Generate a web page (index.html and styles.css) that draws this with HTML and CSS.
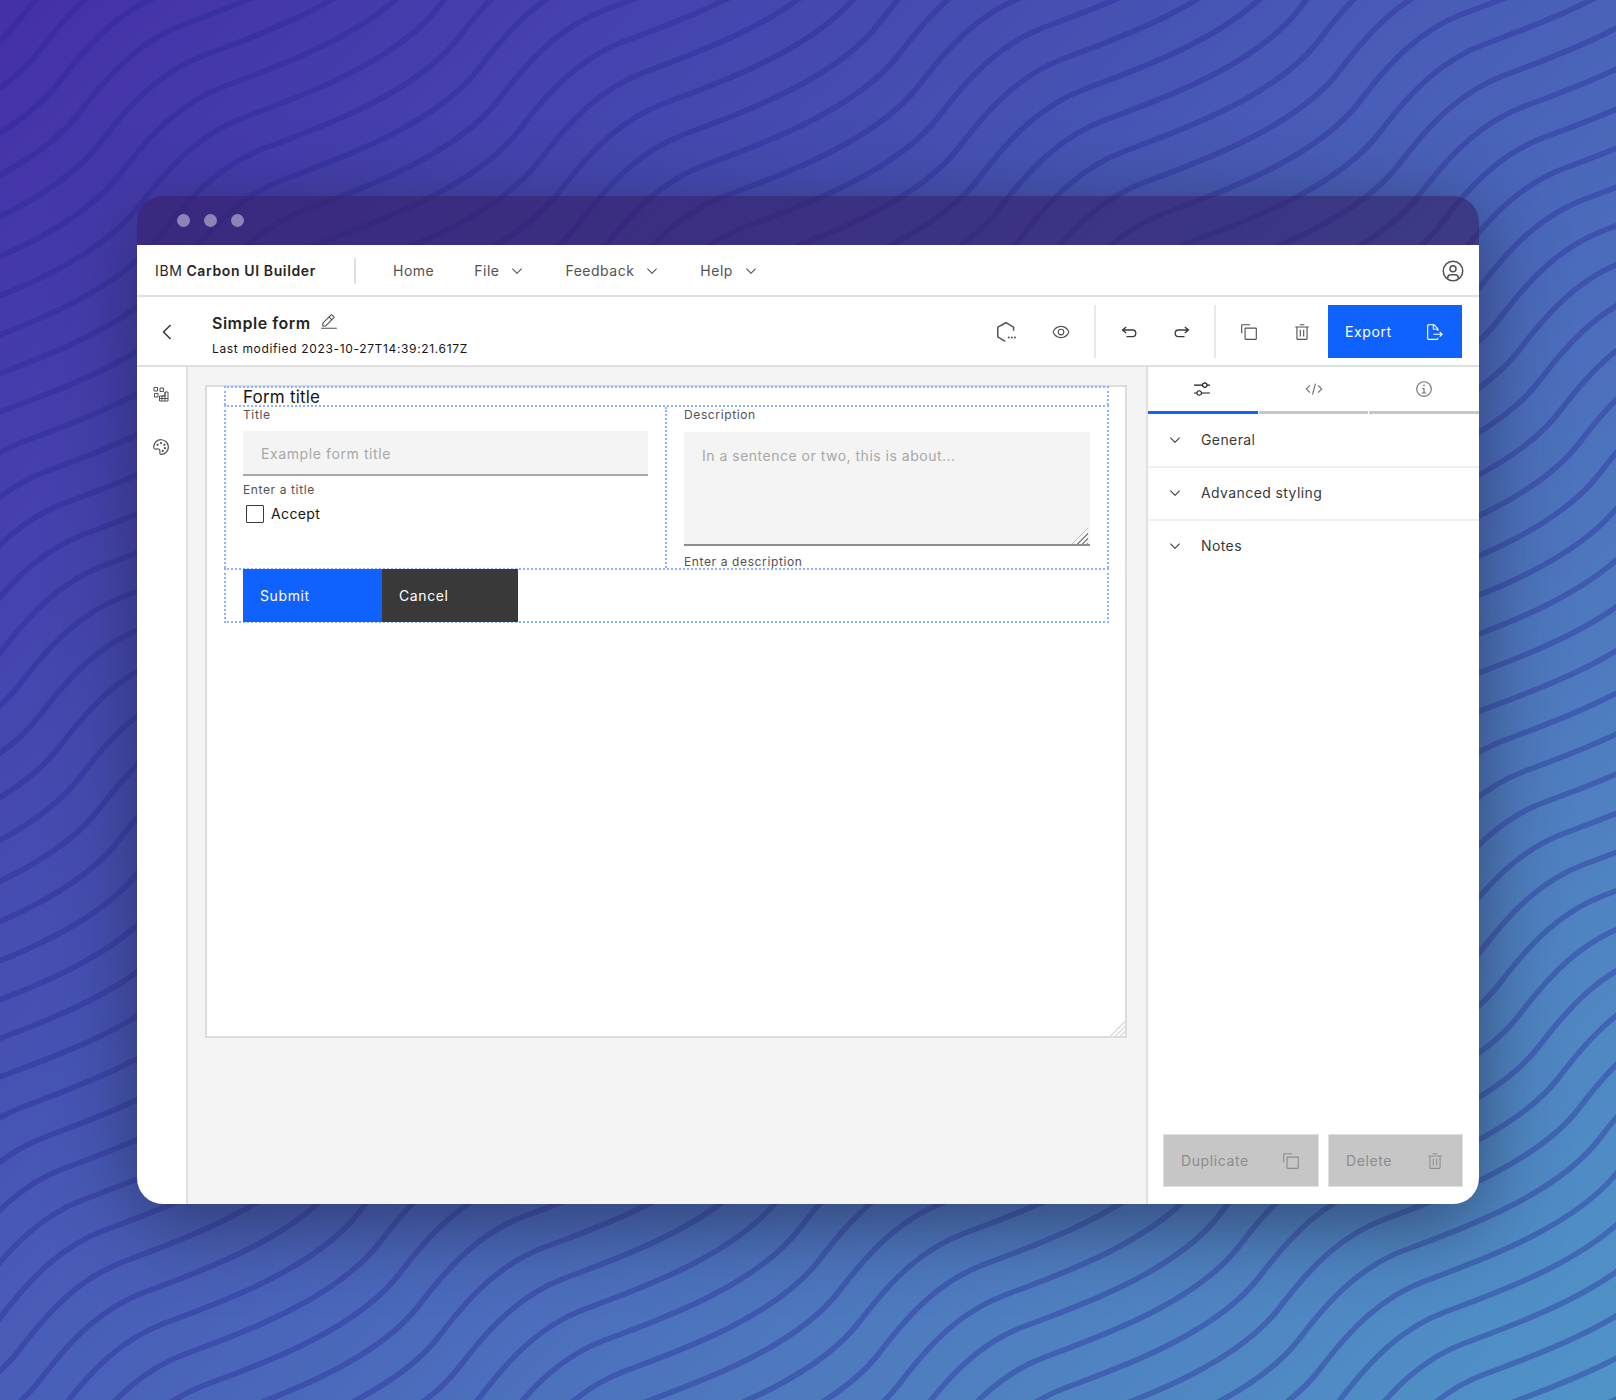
FILE: index.html
```html
<!DOCTYPE html>
<html lang="en">
<head>
<meta charset="utf-8">
<title>IBM Carbon UI Builder</title>
<link rel="stylesheet" href="styles.css">
</head>
<body>
<svg class="backdrop" viewBox="0 0 1616 1400" aria-hidden="true">
  <defs>
    <path id="wave" d="M-1520 957c32-42 62-72 105-88c45-17 150-52 195-112c32-42 62-72 105-88c45-17 150-52 195-112c32-42 62-72 105-88c45-17 150-52 195-112c32-42 62-72 105-88c45-17 150-52 195-112c32-42 62-72 105-88c45-17 150-52 195-112c32-42 62-72 105-88c45-17 150-52 195-112c32-42 62-72 105-88c45-17 150-52 195-112c32-42 62-72 105-88c45-17 150-52 195-112c32-42 62-72 105-88c45-17 150-52 195-112c32-42 62-72 105-88c45-17 150-52 195-112c32-42 62-72 105-88c45-17 150-52 195-112c32-42 62-72 105-88c45-17 150-52 195-112"/>
    <g id="waves8">
      <use href="#wave"/>
      <use href="#wave" transform="translate(20 31)"/>
      <use href="#wave" transform="translate(40 62)"/>
      <use href="#wave" transform="translate(60 93)"/>
      <use href="#wave" transform="translate(80 124)"/>
      <use href="#wave" transform="translate(100 155)"/>
      <use href="#wave" transform="translate(120 186)"/>
      <use href="#wave" transform="translate(140 217)"/>
    </g>
  </defs>
  <g class="waves">
    <use href="#waves8"/>
    <use href="#waves8" transform="translate(160 248)"/>
    <use href="#waves8" transform="translate(320 496)"/>
    <use href="#waves8" transform="translate(480 744)"/>
    <use href="#waves8" transform="translate(640 992)"/>
    <use href="#waves8" transform="translate(800 1240)"/>
    <use href="#waves8" transform="translate(960 1488)"/>
    <use href="#waves8" transform="translate(1120 1736)"/>
  </g>
</svg>

<main class="window">
  <div class="titlebar">
    <span class="dot"></span><span class="dot"></span><span class="dot"></span>
  </div>

  <header class="nav">
    <div class="brand">IBM <b>Carbon UI Builder</b></div>
    <nav class="nav-links">
      <a class="nav-link">Home</a>
      <a class="nav-link">File <svg class="i16" viewBox="0 0 16 16"><path d="M8 11L3 6l.7-.7L8 9.6l4.3-4.3.7.7z"/></svg></a>
      <a class="nav-link">Feedback <svg class="i16" viewBox="0 0 16 16"><path d="M8 11L3 6l.7-.7L8 9.6l4.3-4.3.7.7z"/></svg></a>
      <a class="nav-link">Help <svg class="i16" viewBox="0 0 16 16"><path d="M8 11L3 6l.7-.7L8 9.6l4.3-4.3.7.7z"/></svg></a>
    </nav>
    <svg class="i24 user" viewBox="0 0 32 32"><path d="M16 8a5 5 0 1 0 5 5A5 5 0 0 0 16 8zm0 8a3 3 0 1 1 3-3A3 3 0 0 1 16 16z"/><path d="M16 2a14 14 0 1 0 14 14A14.016 14.016 0 0 0 16 2zM10 26.377V25a3.003 3.003 0 0 1 3-3h6a3.003 3.003 0 0 1 3 3v1.377a11.899 11.899 0 0 1-12 0zm13.992-1.451A5.002 5.002 0 0 0 19 20h-6a5.002 5.002 0 0 0-4.992 4.926 12 12 0 1 1 15.985 0z"/></svg>
  </header>

  <section class="toolbar">
    <div class="back"><svg class="i24" viewBox="0 0 32 32"><path d="M10 16L20 6l1.4 1.4L12.8 16l8.6 8.6L20 26z"/></svg></div>
    <div class="doc">
      <div class="doc-title">Simple form <svg class="i18" viewBox="0 0 32 32"><path d="M2 26h28v2H2zM25.4 9c.8-.8.8-2 0-2.8l-3.6-3.6c-.8-.8-2-.8-2.8 0l-15 15V24h6.4l15-15zm-5-5L24 7.6l-3 3L17.4 7l3-3zM6 22v-3.6l10-10 3.6 3.6-10 10H6z"/></svg></div>
      <div class="doc-date">Last modified 2023-10-27T14:39:21.617Z</div>
    </div>
    <div class="tools">
      <div class="tool"><svg class="hexicon" viewBox="0 0 32 32"><path class="hex" d="M27 14V9L16 2.500 4 9v14l11 6.500"/><circle cx="20" cy="24" r="1.400"/><circle cx="24.500" cy="24" r="1.400"/><circle cx="29" cy="24" r="1.400"/></svg></div>
      <div class="tool"><svg class="i18 eye" viewBox="0 0 32 32"><path d="M30.94 15.66A16.69 16.69 0 0 0 16 5 16.69 16.69 0 0 0 1.06 15.66a1 1 0 0 0 0 .68A16.69 16.69 0 0 0 16 27a16.69 16.69 0 0 0 14.94-10.66 1 1 0 0 0 0-.68zM16 25c-5.3 0-10.9-3.93-12.93-9C5.1 10.93 10.7 7 16 7s10.9 3.93 12.93 9C26.9 21.07 21.3 25 16 25z"/><path d="M16 10a6 6 0 1 0 6 6 6 6 0 0 0-6-6zm0 10a4 4 0 1 1 4-4 4 4 0 0 1-4 4z"/></svg></div>
      <span class="tool-sep"></span>
      <div class="tool"><svg class="hook" viewBox="0 0 16 12"><path d="M5.200 1 1.500 4l3.700 3M1.500 4h10a3.300 3.300 0 0 1 0 6.600H5.500"/></svg></div>
      <div class="tool"><svg class="hook" viewBox="0 0 16 12"><path d="M10.800 1l3.700 3-3.700 3M14.500 4h-10a3.300 3.300 0 0 0 0 6.600h6"/></svg></div>
      <span class="tool-sep"></span>
      <div class="tool"><svg class="i18" viewBox="0 0 32 32"><path d="M28 10v18H10V10h18m0-2H10a2 2 0 0 0-2 2v18a2 2 0 0 0 2 2h18a2 2 0 0 0 2-2V10a2 2 0 0 0-2-2z"/><path d="M4 18H2V4a2 2 0 0 1 2-2h14v2H4z"/></svg></div>
      <div class="tool"><svg class="i18" viewBox="0 0 32 32"><path d="M12 12h2v12h-2zM18 12h2v12h-2z"/><path d="M4 6v2h2v20a2 2 0 0 0 2 2h16a2 2 0 0 0 2-2V8h2V6zm4 22V8h16v20zM12 2h8v2h-8z"/></svg></div>
      <button class="btn btn-primary export">Export <svg class="i18" viewBox="0 0 32 32"><path d="M13 21h13.17l-2.58 2.59L25 25l5-5-5-5-1.41 1.41L26.17 19H13v2z"/><path d="M22 14v-4a1 1 0 0 0-.29-.71l-7-7A1 1 0 0 0 14 2H4a2 2 0 0 0-2 2v24a2 2 0 0 0 2 2h16a2 2 0 0 0 2-2v-2h-2v2H4V4h8v6a2 2 0 0 0 2 2h6v2zm-8-4V4.41L19.59 10z"/></svg></button>
    </div>
  </section>

  <div class="workspace">
    <aside class="rail">
      <div class="rail-item"><svg class="i16" viewBox="0 0 32 32"><path class="outline" d="M2 3h7v7H2zM14 4h7v7h-7zM3 15h7v7H3zM24 12h6v18H13V20h11zM24 12v18M18 20v10M13 25h17M18 20h6"/></svg></div>
      <div class="rail-item"><svg class="i18" viewBox="0 0 32 32"><circle cx="10" cy="12" r="2"/><circle cx="16" cy="9" r="2"/><circle cx="22" cy="12" r="2"/><circle cx="23" cy="18" r="2"/><circle cx="19" cy="23" r="2"/><path d="M16.540 2A14 14 0 0 0 2 16a4.820 4.820 0 0 0 6.090 4.650l1.120-.31a3 3 0 0 1 3.790 2.900V27a3 3 0 0 0 3 3 14 14 0 0 0 .54-28zm8.110 22.310A11.930 11.930 0 0 1 16 28a1 1 0 0 1-1-1v-3.760a5 5 0 0 0-5-5 5.070 5.070 0 0 0-1.330.18l-1.120.31A2.820 2.820 0 0 1 4 16 12 12 0 0 1 16.470 4 12.180 12.180 0 0 1 28 15.530a11.890 11.890 0 0 1-3.350 8.780z"/></svg></div>
    </aside>

    <div class="stage">
      <div class="canvas">
        <div class="rows">
          <div class="row row-title"><div class="form-title">Form title</div></div>
          <div class="row row-fields">
            <div class="col">
              <label class="label">Title</label>
              <input class="input" type="text" placeholder="Example form title">
              <div class="helper">Enter a title</div>
              <div class="check"><span class="box"></span>Accept</div>
            </div>
            <div class="col col-right">
              <label class="label">Description</label>
              <div class="area-wrap">
                <textarea class="textarea" placeholder="In a sentence or two, this is about..."></textarea>
                <span class="grip grip-dark"></span>
              </div>
              <div class="helper helper-area">Enter a description</div>
            </div>
          </div>
          <div class="row row-actions">
            <button class="btn btn-primary submit">Submit</button>
            <button class="btn btn-dark cancel">Cancel</button>
          </div>
        </div>
        <span class="grip grip-light"></span>
      </div>
    </div>

    <aside class="panel">
      <div class="tabs">
        <div class="tab active"><svg class="i18" viewBox="0 0 32 32"><path d="M30 8h-4.100c-.5-2.300-2.500-4-4.900-4s-4.400 1.700-4.900 4H2v2h14.100c.5 2.300 2.500 4 4.900 4s4.400-1.700 4.900-4H30V8zm-9 4c-1.700 0-3-1.300-3-3s1.300-3 3-3 3 1.300 3 3-1.300 3-3 3zM2 24h4.100c.5 2.300 2.500 4 4.900 4s4.400-1.700 4.900-4H30v-2H15.900c-.5-2.300-2.500-4-4.900-4s-4.400 1.700-4.900 4H2v2zm9-4c1.700 0 3 1.300 3 3s-1.300 3-3 3-3-1.300-3-3 1.300-3 3-3z"/></svg></div>
        <div class="tab"><svg class="i18 muted" viewBox="0 0 32 32"><path d="M31 16l-7 7-1.410-1.410L28.170 16l-5.580-5.590L24 9l7 7zM1 16l7-7 1.410 1.410L3.830 16l5.580 5.590L8 23l-7-7zM12.419 25.484L17.639 6l1.932.518L14.350 26z"/></svg></div>
        <div class="tab"><svg class="i18 muted" viewBox="0 0 32 32"><path d="M17 22v-8h-4v2h2v6h-3v2h8v-2h-3zM16 8a1.500 1.500 0 1 0 1.500 1.500A1.500 1.500 0 0 0 16 8z"/><path d="M16 30a14 14 0 1 1 14-14 14 14 0 0 1-14 14zm0-26a12 12 0 1 0 12 12A12 12 0 0 0 16 4z"/></svg></div>
      </div>
      <div class="acc"><svg class="i16" viewBox="0 0 16 16"><path d="M8 11L3 6l.7-.7L8 9.600l4.300-4.300.7.7z"/></svg><span>General</span></div>
      <div class="acc"><svg class="i16" viewBox="0 0 16 16"><path d="M8 11L3 6l.7-.7L8 9.600l4.300-4.300.7.7z"/></svg><span>Advanced styling</span></div>
      <div class="acc acc-last"><svg class="i16" viewBox="0 0 16 16"><path d="M8 11L3 6l.7-.7L8 9.600l4.300-4.300.7.7z"/></svg><span>Notes</span></div>
      <div class="panel-actions">
        <button class="btn btn-disabled duplicate">Duplicate <svg class="i18" viewBox="0 0 32 32"><path d="M28 10v18H10V10h18m0-2H10a2 2 0 0 0-2 2v18a2 2 0 0 0 2 2h18a2 2 0 0 0 2-2V10a2 2 0 0 0-2-2z"/><path d="M4 18H2V4a2 2 0 0 1 2-2h14v2H4z"/></svg></button>
        <button class="btn btn-disabled delete">Delete <svg class="i18" viewBox="0 0 32 32"><path d="M12 12h2v12h-2zM18 12h2v12h-2z"/><path d="M4 6v2h2v20a2 2 0 0 0 2 2h16a2 2 0 0 0 2-2V8h2V6zm4 22V8h16v20zM12 2h8v2h-8z"/></svg></button>
      </div>
    </aside>
  </div>
</main>
</body>
</html>
```
FILE: styles.css
```css
* { box-sizing: border-box; }

html, body { margin: 0; padding: 0; }

body {
  position: relative;
  width: 1616px;
  height: 1400px;
  overflow: hidden;
  padding: 196px 137px 0;
  font-family: Inter, "Noto Sans", "Liberation Sans", sans-serif;
  font-size: 14px;
  line-height: 20px;
  letter-spacing: 0.5px;
  color: #161616;
  background: linear-gradient(137deg, #4430a8 0%, #4650b2 35%, #4a66ba 55%, #4f7fc0 78%, #4f94c8 100%);
}

.backdrop {
  position: absolute;
  top: 0;
  left: 0;
  width: 1616px;
  height: 1400px;
}

.waves {
  fill: none;
  stroke: rgba(38, 38, 150, 0.36);
  stroke-width: 5.500;
  stroke-linecap: round;
}

svg { flex: none; display: block; fill: currentColor; }
.i16 { width: 16px; height: 16px; }
.i18 { width: 18px; height: 18px; }
.i24 { width: 24px; height: 24px; }

.window {
  position: relative;
  display: flex;
  flex-direction: column;
  width: 1342px;
  height: 1008px;
  border-radius: 26px;
  overflow: hidden;
  box-shadow: 0 18px 80px rgba(30, 35, 70, 0.62);
}

.titlebar {
  display: flex;
  align-items: center;
  gap: 14px;
  height: 49px;
  padding-left: 40px;
  background: rgba(52, 30, 100, 0.62);
}

.dot {
  width: 13px;
  height: 13px;
  border-radius: 50%;
  background: #8c83b8;
}

.nav {
  display: flex;
  align-items: center;
  height: 52px;
  padding: 1px 14px 0 18px;
  background: #fff;
  border-bottom: 2px solid #e0e0e0;
}

.brand {
  display: flex;
  align-items: center;
  gap: 4px;
  height: 26px;
  width: 201px;
  border-right: 2px solid #e0e0e0;
  color: #262626;
  letter-spacing: 0.62px;
}
.brand b { font-weight: 600; }

.nav-links {
  display: flex;
  align-items: center;
  gap: 40px;
  margin-left: 37px;
  color: #525252;
}

.nav-link {
  display: flex;
  align-items: center;
  gap: 10px;
}

.user { margin-left: auto; color: #525252; }

.toolbar {
  display: flex;
  align-items: center;
  height: 70px;
  padding-top: 1px;
  background: #fff;
  border-bottom: 2px solid #e0e0e0;
}

.back {
  display: flex;
  justify-content: center;
  width: 60px;
  color: #393939;
}

.doc { margin-left: 15px; padding-top: 7px; }

.doc-title {
  display: flex;
  align-items: center;
  gap: 9px;
  font-size: 16px;
  font-weight: 600;
  line-height: 22px;
  color: #262626;
}
.doc-title svg { color: #525252; margin-top: -3px; }

.doc-date {
  margin-top: 6px;
  font-size: 12px;
  line-height: 18px;
  letter-spacing: 0.65px;
  color: #161616;
}

.tools {
  display: flex;
  align-items: stretch;
  height: 53px;
  margin-left: auto;
  margin-right: 17px;
}

.tool {
  display: flex;
  align-items: center;
  justify-content: center;
  width: 53px;
  color: #525252;
}

.eye { margin-right: 2px; }
.hexicon { width: 22px; height: 22px; margin-right: 6px; }
.hex { fill: none; stroke: currentColor; stroke-width: 2.200; }

.hook {
  width: 16px;
  height: 12px;
  fill: none;
  stroke: #393939;
  stroke-width: 1.300;
}

.tool-sep {
  width: 2px;
  margin: 0 6px;
  background: #e8e8e8;
}

.btn {
  display: flex;
  align-items: center;
  justify-content: space-between;
  height: 53px;
  padding: 0 18px 0 17px;
  border: 0;
  font: inherit;
  letter-spacing: 0.6px;
  text-align: left;
}

.btn-primary { background: #0f62fe; color: #fff; }
.btn-dark { background: #393939; color: #fff; }
.btn-disabled {
  background: #c6c6c6;
  color: #8d8d8d;
  border: 1px solid #e0e0e0;
}

.export { width: 134px; }

.workspace {
  display: flex;
  flex: 1;
  min-height: 0;
}

.rail {
  width: 51px;
  background: #fff;
  border-right: 2px solid #e0e0e0;
  flex: none;
}

.rail-item {
  display: flex;
  align-items: center;
  justify-content: center;
  height: 53px;
  padding-right: 1px;
  color: #525252;
}
.outline { fill: none; stroke: currentColor; stroke-width: 2; }

.stage {
  flex: 1;
  min-width: 0;
  padding: 18px 0 0 17px;
  background: #f4f4f4;
}

.canvas {
  position: relative;
  width: 922px;
  height: 653px;
  padding: 0 16px 0 17px;
  background: #fff;
  border: 2px solid #dcdcdc;
}

.grip {
  position: absolute;
  right: 0;
  bottom: 0;
  clip-path: polygon(100% 0, 100% 100%, 0 100%);
}

.grip-light {
  width: 18px;
  height: 18px;
  background: repeating-linear-gradient(135deg, #dcdcdc 0 1.200px, transparent 1.200px 3.600px);
}

.grip-dark {
  width: 16px;
  height: 16px;
  right: 2px;
  bottom: 2px;
  background: repeating-linear-gradient(135deg, #8d8d8d 0 1.200px, transparent 1.200px 3.600px);
}

.rows { margin-top: -1px; }

.row {
  border: 2px dotted #8ab4ff;
  border-bottom: 0;
}

.row-title { height: 19px; padding-left: 17px; }

.form-title {
  font-size: 17px;
  line-height: 20px;
  letter-spacing: 0.2px;
  margin-top: -1px;
}

.row-fields {
  display: flex;
  height: 163px;
}

.col {
  width: 439px;
  padding: 0 17px;
  flex: none;
}

.col-right {
  flex: 1;
  padding: 0 16px 0 17px;
  border-left: 2px dotted #8ab4ff;
}

.label, .helper {
  display: block;
  font-size: 12px;
  line-height: 16px;
  letter-spacing: 0.62px;
  color: #525252;
}
.label { margin-bottom: 8px; }

.input {
  display: block;
  width: 405px;
  height: 45px;
  margin-bottom: 6px;
  padding: 2px 18px 0;
  background: #f4f4f4;
  border: 0;
  border-bottom: 2px solid #a8a8a8;
  border-radius: 0;
  font: inherit;
  letter-spacing: 0.6px;
}

.input::placeholder, .textarea::placeholder { color: #a8a8a8; opacity: 1; }

.area-wrap {
  position: relative;
  width: 406px;
  margin-top: 9px;
}

.textarea {
  display: block;
  width: 406px;
  height: 114px;
  padding: 14px 18px;
  background: #f4f4f4;
  border: 0;
  border-bottom: 2px solid #8d8d8d;
  border-radius: 0;
  font: inherit;
  letter-spacing: 0.5px;
  resize: none;
}

.helper-area { margin-top: 8px; }

.check {
  display: flex;
  align-items: center;
  gap: 7px;
  margin-top: 6px;
  padding-left: 3px;
  letter-spacing: 0.36px;
  color: #161616;
}

.box {
  width: 18px;
  height: 18px;
  border: 1.500px solid #393939;
  border-radius: 1px;
}

.row-actions {
  display: flex;
  height: 55px;
  padding-left: 17px;
  border-bottom: 2px dotted #8ab4ff;
}

.row-actions .btn { margin-top: -1px; }
.submit { width: 139px; }
.cancel { width: 136px; }

.panel {
  display: flex;
  flex-direction: column;
  flex: none;
  width: 333px;
  background: #fff;
  border-left: 2px solid #e0e0e0;
}

.tabs {
  display: flex;
  height: 47px;
  margin-bottom: 1px;
  gap: 1px;
}

.tab {
  flex: 1;
  display: flex;
  align-items: center;
  justify-content: center;
  border-bottom: 3px solid #c6c6c6;
  color: #525252;
}
.tab.active { border-bottom-color: #0f62fe; color: #161616; }
.tab.active svg { margin-right: 2px; }
.muted { color: #6f6f6f; }

.acc {
  display: flex;
  align-items: center;
  gap: 18px;
  height: 53px;
  padding: 0 0 1px 19px;
  border-bottom: 2px solid #efefef;
  letter-spacing: 0.4px;
  color: #393939;
}
.acc-last { border-bottom-color: transparent; }

.panel-actions {
  display: flex;
  gap: 9px;
  margin-top: auto;
  padding: 0 16px 17px 15px;
}

.duplicate { width: 156px; }
.delete { width: 135px; }
```
